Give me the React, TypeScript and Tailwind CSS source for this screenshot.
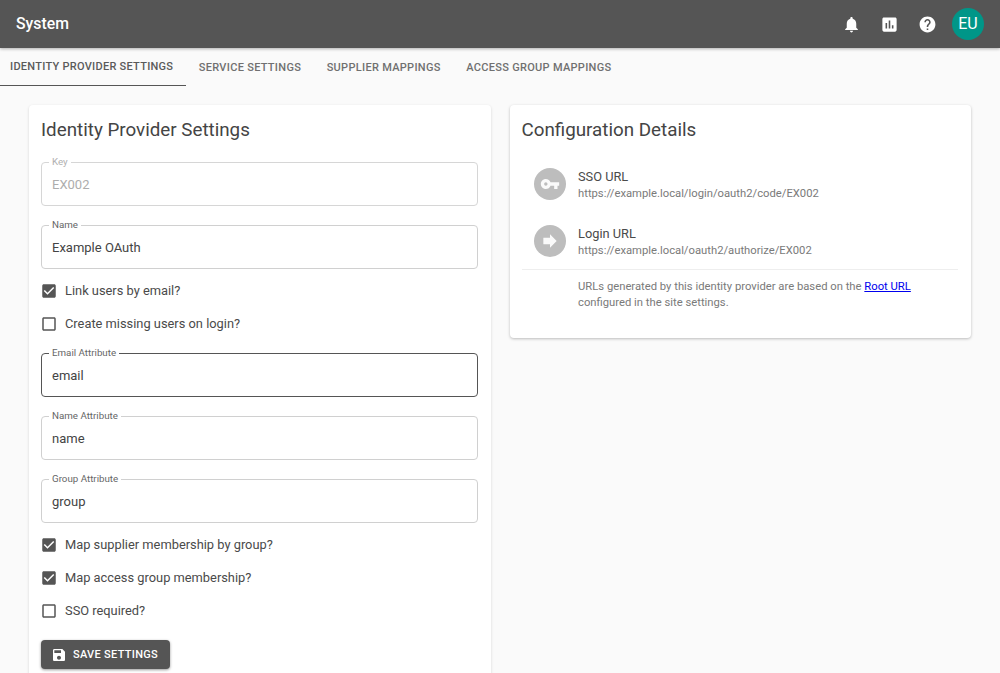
import React from 'react';

const icons = {
  bell: 'M12 22c1.1 0 2-.9 2-2h-4c0 1.1.89 2 2 2zm6-6v-5c0-3.07-1.64-5.64-4.5-6.32V4c0-.83-.67-1.5-1.5-1.5s-1.5.67-1.5 1.5v.68C7.63 5.36 6 7.92 6 11v5l-2 2v1h16v-1l-2-2z',
  chart: 'M19 3H5c-1.1 0-2 .9-2 2v14c0 1.1.9 2 2 2h14c1.1 0 2-.9 2-2V5c0-1.1-.9-2-2-2zM9 17H7v-7h2v7zm4 0h-2V7h2v10zm4 0h-2v-4h2v4z',
  help: 'M12 2C6.48 2 2 6.48 2 12s4.48 10 10 10 10-4.48 10-10S17.52 2 12 2zm1 17h-2v-2h2v2zm2.07-7.75l-.9.92C13.45 12.9 13 13.5 13 15h-2v-.5c0-1.1.45-2.1 1.17-2.83l1.24-1.26c.37-.36.59-.86.59-1.41 0-1.1-.9-2-2-2s-2 .9-2 2H8c0-2.21 1.79-4 4-4s4 1.79 4 4c0 .88-.36 1.68-.93 2.25z',
  key: 'M12.65 10C11.83 7.67 9.61 6 7 6c-3.31 0-6 2.69-6 6s2.69 6 6 6c2.61 0 4.83-1.67 5.65-4H17v4h4v-4h2v-4H12.65zM7 14c-1.1 0-2-.9-2-2s.9-2 2-2 2 .9 2 2-.9 2-2 2z',
  forward: 'M12 8V4l8 8-8 8v-4H4V8z',
  save: 'M17 3H5c-1.11 0-2 .9-2 2v14c0 1.1.89 2 2 2h14c1.1 0 2-.9 2-2V7l-4-4zm-5 16c-1.66 0-3-1.34-3-3s1.34-3 3-3 3 1.34 3 3-1.34 3-3 3zm3-10H5V5h10v4z',
  checked: 'M19 3H5c-1.11 0-2 .9-2 2v14c0 1.1.89 2 2 2h14c1.11 0 2-.9 2-2V5c0-1.1-.89-2-2-2zm-9 14l-5-5 1.41-1.41L10 14.17l7.59-7.59L19 8l-9 9z',
  unchecked: 'M19 5v14H5V5h14m0-2H5c-1.1 0-2 .9-2 2v14c0 1.1.9 2 2 2h14c1.1 0 2-.9 2-2V5c0-1.1-.9-2-2-2z',
};

function Icon({ d, className }: { d: string; className: string }) {
  return (
    <svg viewBox="0 0 24 24" fill="currentColor" className={className} aria-hidden="true">
      <path d={d} />
    </svg>
  );
}

function Field({ label, value, state }: { label: string; value: string; state?: 'disabled' | 'focused' }) {
  const border =
    state === 'focused' ? 'border-[#555555]' : state === 'disabled' ? 'border-[#d6d6d6]' : 'border-[#d0d0d0]';
  return (
    <div className={`relative h-[44px] rounded border ${border} flex items-center pl-[10px] pt-[1px]`}>
      <span
        className={`absolute left-[7px] top-[-7px] bg-white px-[3px] text-[9.75px] leading-[11px] ${
          state === 'disabled' ? 'text-[#b0b0b0]' : 'text-[#666666]'
        }`}
      >
        {label}
      </span>
      <span className={`text-[13px] ${state === 'disabled' ? 'text-[#adadad]' : 'text-[#444444]'}`}>
        {value}
      </span>
    </div>
  );
}

function CheckRow({ label, checked }: { label: string; checked?: boolean }) {
  return (
    <label className="flex h-[33px] items-center">
      <Icon d={checked ? icons.checked : icons.unchecked} className="h-[18px] w-[18px] text-[#555555] -ml-[1px]" />
      <span className="ml-[7px] pt-[1px] text-[12.85px] text-[#4a4a4a]">{label}</span>
    </label>
  );
}

function UrlItem({ icon, title, url }: { icon: string; title: string; url: string }) {
  return (
    <div className="flex h-[57px] items-center pl-[12px]">
      <div className="flex h-[32px] w-[32px] items-center justify-center rounded-full bg-[#bdbdbd]">
        <Icon d={icon} className="h-[20px] w-[20px] text-[#fafafa]" />
      </div>
      <div className="ml-[12.5px] pt-[1px]">
        <div className="text-[12.8px] leading-[19px] text-[#4a4a4a]">{title}</div>
        <div className="text-[11.25px] leading-[16px] text-[#7a7a7a]">{url}</div>
      </div>
    </div>
  );
}

export default function App() {
  return (
    <div className="h-screen overflow-hidden bg-[#fafafa] font-['Roboto',sans-serif]">
      <header className="flex h-[48px] items-center bg-[#555555] pl-[16px] pr-[16px] shadow-[0_1px_3px_rgba(0,0,0,0.3)]">
        <h1 className="flex-1 text-[15.8px] font-medium text-white">System</h1>
        <div className="flex items-center">
          <Icon d={icons.bell} className="h-[19px] w-[19px] text-white" />
          <Icon d={icons.chart} className="ml-[19px] h-[19px] w-[19px] text-white" />
          <Icon d={icons.help} className="ml-[19px] h-[19px] w-[19px] text-white" />
          <div className="ml-[15px] flex h-[32px] w-[32px] items-center justify-center rounded-full bg-[#009688] text-[16px] text-white">
            EU
          </div>
        </div>
      </header>

      <nav className="flex h-[38px] items-stretch">
        <a className="flex w-[186px] items-center border-b border-[#555555] pl-[10px] pt-[2px] text-[11px] font-medium tracking-[0.27px] text-[#5a5a5a]">
          IDENTITY PROVIDER SETTINGS
        </a>
        {['SERVICE SETTINGS', 'SUPPLIER MAPPINGS', 'ACCESS GROUP MAPPINGS'].map((t) => (
          <a key={t} className="flex items-center px-[12.75px] pt-[2px] text-[11px] font-medium tracking-[0.3px] text-[#707070]">
            {t}
          </a>
        ))}
      </nav>

      <main className="flex items-start gap-[19px] pl-[29px] pt-[19px]">
        <section className="w-[461.5px] shrink-0 rounded bg-white pb-[12px] pl-[12px] pr-[13px] pt-[12px] shadow-[0_1px_3px_rgba(0,0,0,0.15)]">
          <h2 className="text-[18.8px] leading-[26px] text-[#444444]">Identity Provider Settings</h2>
          <div className="mt-[19px] flex flex-col">
            <Field label="Key" value="EX002" state="disabled" />
            <div className="mt-[19px]">
              <Field label="Name" value="Example OAuth" />
            </div>
            <div className="mt-[5px]">
              <CheckRow label="Link users by email?" checked />
              <CheckRow label="Create missing users on login?" />
            </div>
            <div className="mt-[13px]">
              <Field label="Email Attribute" value="email" state="focused" />
            </div>
            <div className="mt-[19px]">
              <Field label="Name Attribute" value="name" />
            </div>
            <div className="mt-[19px]">
              <Field label="Group Attribute" value="group" />
            </div>
            <div className="mt-[5px]">
              <CheckRow label="Map supplier membership by group?" checked />
              <CheckRow label="Map access group membership?" checked />
              <CheckRow label="SSO required?" />
            </div>
            <button className="mt-[13px] flex h-[29px] w-[129px] items-center rounded bg-[#555555] pl-[10px] text-[11px] font-medium tracking-[0.3px] text-white shadow-[0_1px_3px_rgba(0,0,0,0.4)]">
              <Icon d={icons.save} className="h-[16px] w-[16px]" />
              <span className="ml-[6px] pt-[1px]">SAVE SETTINGS</span>
            </button>
          </div>
        </section>

        <section className="h-[233px] w-[461.5px] shrink-0 rounded bg-white pl-[12px] pr-[13px] pt-[12px] shadow-[0_1px_3px_rgba(0,0,0,0.25)]">
          <h2 className="text-[18.8px] leading-[26px] text-[#444444]">Configuration Details</h2>
          <div className="mt-[12px]">
            <UrlItem icon={icons.key} title="SSO URL" url="https://example.local/login/oauth2/code/EX002" />
            <UrlItem icon={icons.forward} title="Login URL" url="https://example.local/oauth2/authorize/EX002" />
          </div>
          <div className="border-t border-[#eeeeee] pl-[56.5px] pt-[9px] text-[11.25px] leading-[16px] text-[#7a7a7a]">
            URLs generated by this identity provider are based on the{' '}
            <a className="text-[#0000ee] underline">Root URL</a>
            <br />
            configured in the site settings.
          </div>
        </section>
      </main>
    </div>
  );
}
